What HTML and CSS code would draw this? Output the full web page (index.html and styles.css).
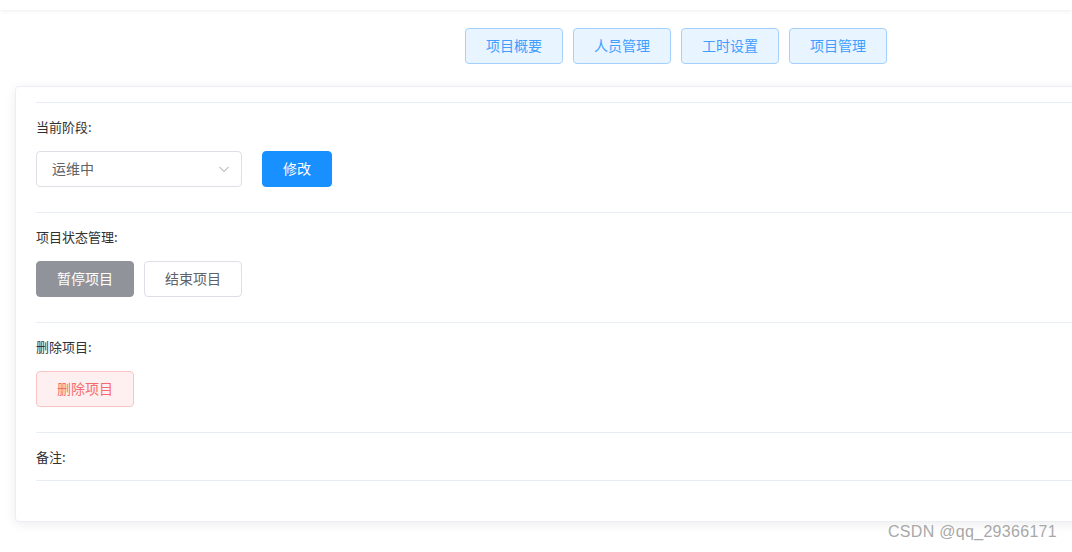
FILE: index.html
```html
<!DOCTYPE html>
<html lang="zh">
<head>
<meta charset="utf-8">
<link rel="stylesheet" href="styles.css">
</head>
<body>
<div class="topbar"></div>
<nav class="tabs">
  <button class="tab">项目概要</button>
  <button class="tab">人员管理</button>
  <button class="tab">工时设置</button>
  <button class="tab">项目管理</button>
</nav>
<div class="card">
  <section class="sec">
    <div class="label">当前阶段:</div>
    <div class="row">
      <div class="select">
        <span>运维中</span>
        <svg class="chev" width="12" height="12" viewBox="0 0 12 12"><path d="M1.5 4 L6 8.5 L10.5 4" fill="none" stroke="#c0c4cc" stroke-width="1.1"/></svg>
      </div>
      <button class="btn primary">修改</button>
    </div>
  </section>
  <section class="sec">
    <div class="label">项目状态管理:</div>
    <div class="row small-gap">
      <button class="btn info">暂停项目</button>
      <button class="btn plain">结束项目</button>
    </div>
  </section>
  <section class="sec">
    <div class="label">删除项目:</div>
    <div class="row">
      <button class="btn danger">删除项目</button>
    </div>
  </section>
  <section class="sec last">
    <div class="label">备注:</div>
  </section>
</div>
<div class="watermark">CSDN @qq_29366171</div>
</body>
</html>
```
FILE: styles.css
```css
html, body {
  margin: 0;
  padding: 0;
  background: #fff;
  overflow: hidden;
  width: 1072px;
  height: 552px;
  font-family: "Noto Sans CJK SC", "Noto Sans", sans-serif;
  position: relative;
}
.topbar {
  height: 10px;
  background: #fff;
  box-shadow: 0 1px 4px rgba(0, 0, 0, 0.07);
  position: relative;
  z-index: 1;
}
.tabs {
  display: flex;
  gap: 10px;
  margin: 18px 0 0 465px;
}
.tab {
  width: 98px;
  height: 36px;
  box-sizing: border-box;
  border: 1px solid #a3d0fd;
  background: #e8f4ff;
  color: #409eff;
  border-radius: 4px;
  font-family: inherit;
  font-size: 14px;
  padding: 0 0 2px;
}
.card {
  margin: 22px 0 0 15px;
  width: 1120px;
  box-sizing: border-box;
  border: 1px solid #ebeef5;
  border-radius: 4px;
  box-shadow: 0 2px 12px rgba(0, 0, 0, 0.08);
  background: #fff;
  padding: 15px 0 40px 20px;
}
.sec {
  border-top: 1px solid #e8ecf3;
  padding: 14px 0 25px;
}
.sec.last {
  padding-bottom: 13px;
  border-bottom: 1px solid #e8ecf3;
}
.label {
  font-size: 13px;
  line-height: 20px;
  color: #303133;
}
.row {
  display: flex;
  gap: 20px;
  margin-top: 14px;
}
.row.small-gap { gap: 10px; }
.select {
  width: 206px;
  height: 36px;
  box-sizing: border-box;
  border: 1px solid #dcdfe6;
  border-radius: 4px;
  display: flex;
  align-items: center;
  justify-content: space-between;
  padding: 0 11px 2px 15px;
  font-size: 14px;
  color: #606266;
}
.chev { display: block; margin-top: 2px; }
.btn {
  height: 36px;
  box-sizing: border-box;
  border-radius: 4px;
  font-family: inherit;
  font-size: 14px;
  padding: 0 0 2px;
  border: 1px solid transparent;
}
.primary {
  width: 70px;
  background: #1890ff;
  border-color: #1890ff;
  color: #fff;
}
.info {
  width: 98px;
  background: #909399;
  border-color: #909399;
  color: #fff;
}
.plain {
  width: 98px;
  background: #fff;
  border-color: #dcdfe6;
  color: #606266;
}
.danger {
  width: 98px;
  background: #fef0f0;
  border-color: #fbc4c4;
  color: #f56c6c;
}
.watermark {
  position: absolute;
  right: 15px;
  top: 523px;
  font-family: "Liberation Sans", Arial, sans-serif;
  font-size: 16px;
  color: #a8a8a8;
  text-shadow: 0 0 1px #fff;
  letter-spacing: 0.3px;
}
```
